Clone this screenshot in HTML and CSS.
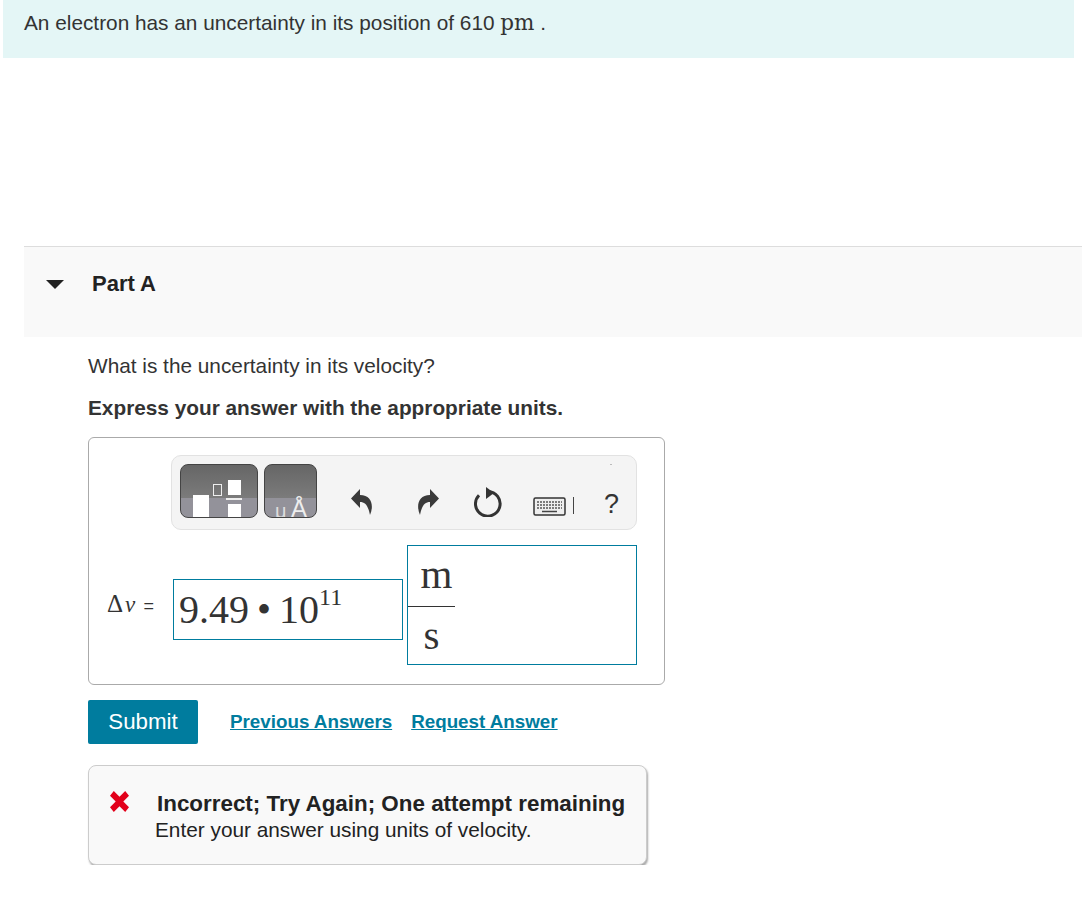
FILE: index.html
```html
<!DOCTYPE html>
<html lang="en">
<head>
    <meta charset="UTF-8">
    <title>Part A</title>
    <link rel="stylesheet" href="styles.css">
</head>
<body>

<div class="intro">An electron has an uncertainty in its position of 610 <span class="unit">pm</span> .</div>

<div class="part-header">
    <svg class="caret" width="18" height="10" viewBox="0 0 18 10"><path d="M0 1h18L9 10z" fill="#222"/></svg>
    <span class="part-title">Part A</span>
</div>

<div class="part-body">
    <p class="question">What is the uncertainty in its velocity?</p>
    <p class="instruction">Express your answer with the appropriate units.</p>

    <div class="answer-box">
        <div class="toolbar">
            <div class="tpl-btn tpl-wide">
                <span class="shape shape-big"></span>
                <span class="shape shape-small"></span>
                <span class="shape shape-top"></span>
                <span class="frac-bar"></span>
                <span class="shape shape-bottom"></span>
            </div>
            <div class="tpl-btn tpl-narrow">
                <span class="mu">μ</span><span class="angstrom">Å</span>
            </div>
            <svg class="tool undo" width="23" height="27" viewBox="0 0 23 27"><path d="M9 0 0 9.500 9 19v-6c5 0 8 3 10 13 4-9 2-20-10-20z" fill="#3a3a3a"/></svg>
            <svg class="tool redo" width="23" height="27" viewBox="0 0 23 27"><path d="M14 0l9 9.500L14 19v-6c-5 0-8 3-10 13C0 17 2 6 14 6z" fill="#3a3a3a"/></svg>
            <svg class="tool reset" width="28" height="30" viewBox="0 0 28 30"><path d="M14 4.500A12.300 12.300 0 1 1 5 8.200" fill="none" stroke="#333" stroke-width="3"/><path d="M12 0l8 6-8 6z" fill="#333"/></svg>
            <svg class="tool keyboard" width="33" height="19" viewBox="0 0 33 19">
                <rect x="1" y="1" width="31" height="17" rx="1.500" fill="#eee" stroke="#333" stroke-width="1.500"/>
                <path d="M4 5h25M4 8h25M4 11h25" stroke="#555" stroke-width="1.500" stroke-dasharray="2 1"/>
                <path d="M9 14.500h15" stroke="#444" stroke-width="1.500"/>
            </svg>
            <span class="kbd-sep"></span>
            <span class="help">?</span>
            <span class="speck"></span>
        </div>

        <div class="answer-row">
            <span class="answer-label"><span class="delta">Δ</span><i class="var">v</i> <span class="equals">=</span></span>
            <div class="value-input">9.49 <span class="dot">•</span> 10<sup>11</sup></div>
            <div class="units-input">
                <div class="fraction">
                    <span class="numer">m</span>
                    <span class="denom">s</span>
                </div>
            </div>
        </div>
    </div>

    <div class="actions">
        <button class="submit">Submit</button>
        <a class="link link-prev" href="#">Previous Answers</a>
        <a class="link" href="#">Request Answer</a>
    </div>

    <div class="feedback">
        <svg class="x-icon" width="19" height="21" viewBox="0 0 20 22"><path d="M0 5 4 0l6 6 6-6 4 5-6 6 6 6-4 5-6-6-6 6-4-5 6-6z" fill="#e2001a"/></svg>
        <div class="feedback-text">
            <div class="feedback-title">Incorrect; Try Again; One attempt remaining</div>
            <div class="feedback-msg">Enter your answer using units of velocity.</div>
        </div>
    </div>
</div>

</body>
</html>
```

FILE: styles.css
```css
body {
    margin: 0;
    font-family: "Liberation Sans", Arial, sans-serif;
    color: #333;
    background-color: white;
    overflow: hidden;
}
.intro {
    margin-left: 3px;
    width: 1071px;
    height: 58px;
    box-sizing: border-box;
    padding-left: 21px;
    padding-top: 11px;
    background-color: #e4f6f6;
    font-size: 20.800px;
    line-height: 24px;
}
.unit {
    font-family: "DejaVu Serif", serif;
    font-size: 21.500px;
}
.part-header {
    display: flex;
    align-items: flex-start;
    margin-top: 188px;
    margin-left: 24px;
    width: 1058px;
    height: 91px;
    box-sizing: border-box;
    border-top: 1px solid #ddd;
    background-color: #f9f9f9;
    padding-top: 24px;
}
.caret {
    margin-left: 22px;
    margin-top: 8px;
}
.part-title {
    margin-left: 28px;
    font-size: 22px;
    line-height: 26px;
    font-weight: bold;
    color: #222;
}
.part-body {
    padding-left: 88px;
}
.question {
    margin: 17px 0 0;
    font-size: 20.800px;
    line-height: 24px;
}
.instruction {
    margin: 18px 0 0;
    font-size: 20.800px;
    line-height: 24px;
    font-weight: bold;
}
.answer-box {
    margin-top: 17px;
    width: 577px;
    height: 248px;
    box-sizing: border-box;
    border: 1px solid #aaa;
    border-radius: 6px;
    padding-top: 17px;
}
.toolbar {
    display: flex;
    align-items: flex-start;
    position: relative;
    margin-left: 82px;
    width: 466px;
    height: 75px;
    box-sizing: border-box;
    border: 1px solid #e2e2e2;
    border-radius: 10px;
    background-color: #f4f4f4;
    padding-top: 8px;
    padding-left: 8px;
}
.tpl-btn {
    position: relative;
    height: 54px;
    box-sizing: border-box;
    border: 1px solid #444;
    border-radius: 8px;
    overflow: hidden;
    background: linear-gradient(to bottom, #666 0, #7b7b7b 63%, #93929a 63%, #93929a 100%);
}
.tpl-wide {
    width: 78px;
}
.tpl-narrow {
    width: 53px;
    margin-left: 6px;
}
.shape {
    position: absolute;
    background-color: white;
}
.shape-big {
    left: 12px;
    top: 30px;
    width: 16px;
    height: 22px;
}
.shape-small {
    left: 32px;
    top: 19px;
    width: 7px;
    height: 10px;
    background-color: transparent;
    border: 1px solid #eee;
}
.shape-top {
    left: 47px;
    top: 15px;
    width: 13px;
    height: 15px;
}
.frac-bar {
    position: absolute;
    left: 45px;
    top: 33px;
    width: 16px;
    height: 2px;
    background-color: #eee;
}
.shape-bottom {
    left: 47px;
    top: 39px;
    width: 13px;
    height: 13px;
}
.mu {
    position: absolute;
    left: 10px;
    top: 41px;
    font-size: 20px;
    line-height: 10px;
    color: #ddd;
}
.angstrom {
    position: absolute;
    left: 26px;
    top: 36px;
    font-size: 24px;
    line-height: 16px;
    color: #eee;
}
.tool {
    flex: none;
}
.undo {
    margin-left: 34px;
    margin-top: 25px;
}
.redo {
    margin-left: 42px;
    margin-top: 25px;
}
.reset {
    margin-left: 35px;
    margin-top: 23px;
}
.keyboard {
    margin-left: 31px;
    margin-top: 33px;
}
.kbd-sep {
    width: 1px;
    height: 17px;
    margin-left: 7px;
    margin-top: 33px;
    background-color: #444;
}
.help {
    margin-left: 30px;
    margin-top: 25px;
    font-size: 27px;
    line-height: 30px;
}
.speck {
    position: absolute;
    left: 438px;
    top: 8px;
    width: 2px;
    height: 1px;
    background-color: #bbb;
}
.answer-row {
    display: flex;
    align-items: flex-start;
    margin-top: 15px;
    margin-left: 18px;
}
.answer-label {
    flex: none;
    margin-top: 47px;
    width: 66px;
    font-family: "Liberation Serif", serif;
    font-size: 25px;
    line-height: 24px;
    white-space: nowrap;
}
.var {
    font-size: 23px;
    margin-left: 2px;
}
.equals {
    font-family: "Liberation Sans", Arial, sans-serif;
    font-size: 18px;
    margin-left: 2px;
}
.value-input {
    margin-top: 34px;
    width: 230px;
    height: 61px;
    box-sizing: border-box;
    border: 1px solid #007c9e;
    padding-left: 5px;
    padding-top: 10px;
    font-family: "Liberation Serif", serif;
    font-size: 40px;
    line-height: 40px;
}
.value-input sup {
    font-size: 24px;
    line-height: 0;
    vertical-align: 18px;
}
.dot {
    margin: 0 -2px;
}
.units-input {
    margin-left: 4px;
    width: 230px;
    height: 120px;
    box-sizing: border-box;
    border: 1px solid #007c9e;
}
.fraction {
    width: 47px;
    font-family: "Liberation Serif", serif;
    font-size: 41px;
    text-align: center;
}
.numer, .denom {
    display: block;
    box-sizing: border-box;
}
.numer {
    height: 61px;
    padding-top: 5px;
    padding-left: 10px;
    line-height: 46px;
    border-bottom: 1px solid #333;
}
.denom {
    padding-top: 5px;
    line-height: 46px;
}
.actions {
    display: flex;
    align-items: center;
    margin-top: 15px;
}
.submit {
    width: 110px;
    height: 44px;
    padding: 0;
    border: none;
    border-radius: 2px;
    background-color: #007c9e;
    color: white;
    font-family: "Liberation Sans", Arial, sans-serif;
    font-size: 22.300px;
}
.link {
    color: #007c9e;
    font-size: 18.800px;
    font-weight: bold;
    text-decoration: underline;
}
.link-prev {
    margin-left: 32px;
    margin-right: 19px;
}
.feedback {
    display: flex;
    align-items: flex-start;
    margin-top: 21px;
    width: 559px;
    height: 100px;
    box-sizing: border-box;
    border: 1px solid #ccc;
    border-radius: 8px;
    background-color: #f9f9f9;
    box-shadow: 1px 2px 2px #aaa;
    padding-top: 24px;
}
.x-icon {
    margin-left: 21px;
    margin-top: 1px;
    flex: none;
}
.feedback-text {
    margin-left: 26px;
    color: #222;
}
.feedback-title {
    margin-left: 2px;
    font-size: 22.400px;
    line-height: 27px;
    font-weight: bold;
}
.feedback-msg {
    font-size: 20.800px;
    line-height: 26px;
}
```
